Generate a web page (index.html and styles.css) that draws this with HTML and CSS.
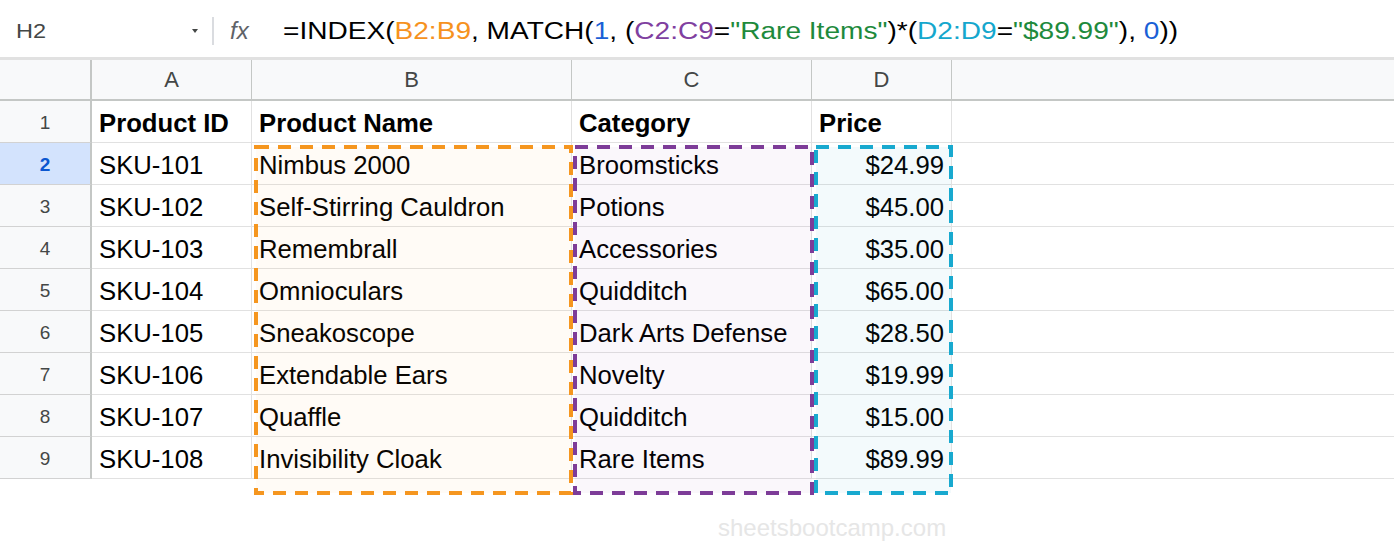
FILE: index.html
```html
<!DOCTYPE html>
<html lang="en">
<head>
<meta charset="utf-8">
<title>INDEX MATCH multiple criteria</title>
<link rel="stylesheet" href="styles.css">
</head>
<body>
<div class="formula-bar">
  <div class="namebox"><span class="cellref">H2</span><span class="caret"></span></div>
  <div class="divider"></div>
  <div class="fx">fx</div>
  <div class="formula">=INDEX(<span class="f-orange">B2:B9</span>, MATCH(<span class="f-blue">1</span>, (<span class="f-purple">C2:C9</span>=<span class="f-green">"Rare Items"</span>)*(<span class="f-cyan">D2:D9</span>=<span class="f-green">"$89.99"</span>), <span class="f-blue">0</span>))</div>
</div>

<div class="sheet">
  <div class="grid">
    <div class="cell corner"></div>
    <div class="cell col-head">A</div>
    <div class="cell col-head">B</div>
    <div class="cell col-head">C</div>
    <div class="cell col-head">D</div>
    <div class="cell col-head filler"></div>

    <div class="cell row-head">1</div>
    <div class="cell bold">Product ID</div>
    <div class="cell bold">Product Name</div>
    <div class="cell bold">Category</div>
    <div class="cell bold">Price</div>
    <div class="cell filler"></div>

    <div class="cell row-head active">2</div>
    <div class="cell">SKU-101</div>
    <div class="cell">Nimbus 2000</div>
    <div class="cell">Broomsticks</div>
    <div class="cell num">$24.99</div>
    <div class="cell filler"></div>

    <div class="cell row-head">3</div>
    <div class="cell">SKU-102</div>
    <div class="cell">Self-Stirring Cauldron</div>
    <div class="cell">Potions</div>
    <div class="cell num">$45.00</div>
    <div class="cell filler"></div>

    <div class="cell row-head">4</div>
    <div class="cell">SKU-103</div>
    <div class="cell">Remembrall</div>
    <div class="cell">Accessories</div>
    <div class="cell num">$35.00</div>
    <div class="cell filler"></div>

    <div class="cell row-head">5</div>
    <div class="cell">SKU-104</div>
    <div class="cell">Omnioculars</div>
    <div class="cell">Quidditch</div>
    <div class="cell num">$65.00</div>
    <div class="cell filler"></div>

    <div class="cell row-head">6</div>
    <div class="cell">SKU-105</div>
    <div class="cell">Sneakoscope</div>
    <div class="cell">Dark Arts Defense</div>
    <div class="cell num">$28.50</div>
    <div class="cell filler"></div>

    <div class="cell row-head">7</div>
    <div class="cell">SKU-106</div>
    <div class="cell">Extendable Ears</div>
    <div class="cell">Novelty</div>
    <div class="cell num">$19.99</div>
    <div class="cell filler"></div>

    <div class="cell row-head">8</div>
    <div class="cell">SKU-107</div>
    <div class="cell">Quaffle</div>
    <div class="cell">Quidditch</div>
    <div class="cell num">$15.00</div>
    <div class="cell filler"></div>

    <div class="cell row-head">9</div>
    <div class="cell">SKU-108</div>
    <div class="cell">Invisibility Cloak</div>
    <div class="cell">Rare Items</div>
    <div class="cell num">$89.99</div>
    <div class="cell filler"></div>
  </div>

  <div class="range range-b">
    <svg width="319" height="350" viewBox="0 0 319 350"><rect x="2" y="2" width="315" height="346" fill="#f7931e" fill-opacity="0.04" stroke="#f5961f" stroke-width="4" stroke-dasharray="13 9"/></svg>
  </div>
  <div class="range range-c">
    <svg width="241" height="350" viewBox="0 0 241 350"><rect x="2" y="2" width="237" height="346" fill="#7e3f98" fill-opacity="0.04" stroke="#7d3c98" stroke-width="4" stroke-dasharray="13 9"/></svg>
  </div>
  <div class="range range-d">
    <svg width="139" height="350" viewBox="0 0 139 350"><rect x="2" y="2" width="135" height="346" fill="#12a5c9" fill-opacity="0.05" stroke="#18a9cf" stroke-width="4" stroke-dasharray="13 9"/></svg>
  </div>
</div>

<div class="footer">sheetsbootcamp.com</div>
</body>
</html>
```

FILE: styles.css
```css
html, body {
  margin: 0;
  padding: 0;
  background: #ffffff;
}

body {
  font-family: "Liberation Sans", Arial, sans-serif;
  color: #000000;
}

/* ---------- formula bar ---------- */
.formula-bar {
  display: flex;
  align-items: center;
  height: 53px;
  padding-top: 4px;
  border-bottom: 3px solid #e1e1e1;
  white-space: nowrap;
}

.namebox {
  box-sizing: border-box;
  width: 212px;
  padding-left: 16px;
  padding-right: 14px;
  display: flex;
  align-items: center;
  justify-content: space-between;
}

.cellref {
  display: inline-block;
  font-size: 21px;
  color: #444746;
  transform: scaleX(1.12);
  transform-origin: left center;
}

.caret {
  width: 0;
  height: 0;
  border-left: 3px solid transparent;
  border-right: 3px solid transparent;
  border-top: 4px solid #444746;
  margin-top: 1px;
}

.divider {
  width: 2px;
  height: 28px;
  background: #dadce0;
}

.fx {
  box-sizing: border-box;
  width: 69px;
  padding-left: 16px;
  font-size: 24px;
  font-style: italic;
  color: #5f6368;
}

.formula {
  font-size: 24.7px;
  color: #000000;
  transform: scaleX(1.137);
  transform-origin: left center;
}

.f-orange { color: #f6921e; }
.f-blue   { color: #1a5fd6; }
.f-purple { color: #8040a0; }
.f-green  { color: #1e8a3c; }
.f-cyan   { color: #15a7cd; }

/* ---------- sheet ---------- */
.sheet {
  position: relative;
}

.grid {
  display: grid;
  grid-template-columns: 92px 160px 320px 240px 140px 1fr;
  grid-template-rows: 41px repeat(9, 42px);
}

.cell {
  box-sizing: border-box;
  display: flex;
  align-items: center;
  padding: 3px 7px 0 7px;
  border-right: 1px solid #e1e1e1;
  border-bottom: 1px solid #e1e1e1;
  font-size: 25.7px;
  white-space: nowrap;
  overflow: hidden;
}

.corner {
  background: #f8f9fa;
  border-right: 2px solid #c4c7c5;
  border-bottom: 2px solid #c4c7c5;
}

.col-head {
  background: #f8f9fa;
  justify-content: center;
  padding: 0;
  font-size: 22px;
  color: #444746;
  border-right: 1px solid #c4c7c5;
  border-bottom: 2px solid #c4c7c5;
}

.row-head {
  background: #f8f9fa;
  justify-content: center;
  padding: 3px 0 0 0;
  font-size: 19px;
  color: #444746;
  border-right: 2px solid #c4c7c5;
  border-bottom: 1px solid #d2d2d2;
}

.row-head.active {
  background: #d3e3fd;
  color: #0b57d0;
  font-weight: bold;
}

.filler {
  border-right: none;
}

.bold {
  font-weight: bold;
}

.num {
  justify-content: flex-end;
}

/* ---------- highlighted ranges (overlay) ---------- */
.range {
  position: absolute;
  top: 85px;
  height: 350px;
  pointer-events: none;
}

.range svg {
  display: block;
}

.range-b { left: 254px; width: 319px; }
.range-c { left: 573px; width: 241px; }
.range-d { left: 814px; width: 139px; }

/* ---------- watermark ---------- */
.footer {
  margin-top: 35px;
  padding-left: 718px;
  font-size: 24px;
  line-height: 28px;
  color: #e6e6e6;
}
```
